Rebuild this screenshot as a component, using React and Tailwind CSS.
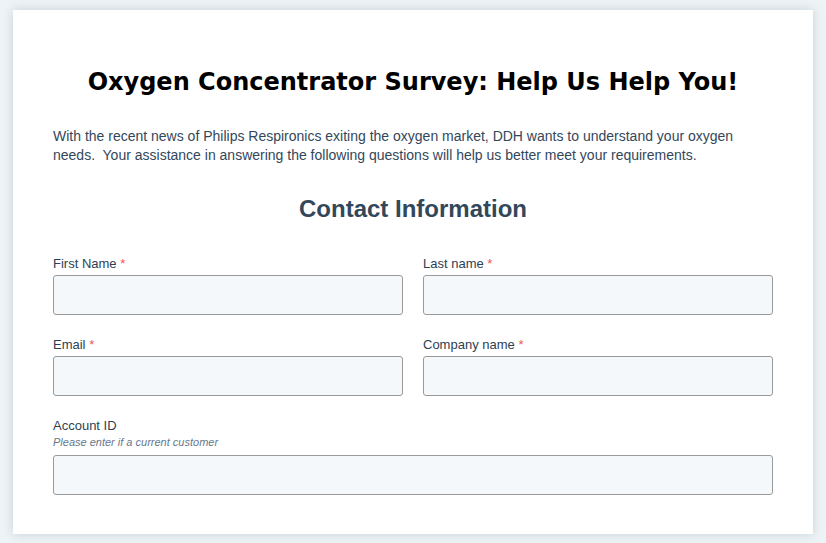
export default function App() {
  const Label = ({ children, req }) => (
    <label className="block text-[13px] leading-[20px] text-[#2e3f52]">
      {children}
      {req && <span className="text-[#f2545b]"> *</span>}
    </label>
  );
  const Input = () => (
    <div className="h-[40px] rounded-[3px] border border-[#9a9a9a] bg-[#f5f8fa] mt-[1px]" />
  );
  return (
    <div className="w-[826px] h-[543px] bg-[#eef3f6] pt-[10px] pl-[13px] font-['Liberation_Sans',Arial,sans-serif]">
      <div className="w-[800px] h-[524px] bg-white shadow-[0_0_10px_rgba(120,150,170,0.35)] px-[40px] pt-[57px]">
        <h1 className="text-center font-['DejaVu_Sans',Verdana,sans-serif] font-bold text-[24px] leading-[30px] text-black">
          Oxygen Concentrator Survey: Help Us Help You!
        </h1>
        <p className="mt-[30px] text-[14px] leading-[19px] text-[#33475b]">
          With the recent news of Philips Respironics exiting the oxygen market, DDH wants to understand your oxygen needs.&nbsp; Your assistance in answering the following questions will help us better meet your requirements.
        </p>
        <h2 className="mt-[29px] text-center font-bold text-[24px] leading-[30px] text-[#33475b]">
          Contact Information
        </h2>
        <div className="mt-[30px] grid grid-cols-2 gap-x-[20px] gap-y-[20px]">
          <div>
            <Label req>First Name</Label>
            <Input />
          </div>
          <div>
            <Label req>Last name</Label>
            <Input />
          </div>
          <div>
            <Label req>Email</Label>
            <Input />
          </div>
          <div>
            <Label req>Company name</Label>
            <Input />
          </div>
          <div className="col-span-2">
            <Label>Account ID</Label>
            <div className="-mt-[1px] mb-[6px] text-[11px] leading-[14px] italic text-[#66788d]">Please enter if a current customer</div>
            <Input />
          </div>
        </div>
      </div>
    </div>
  );
}
